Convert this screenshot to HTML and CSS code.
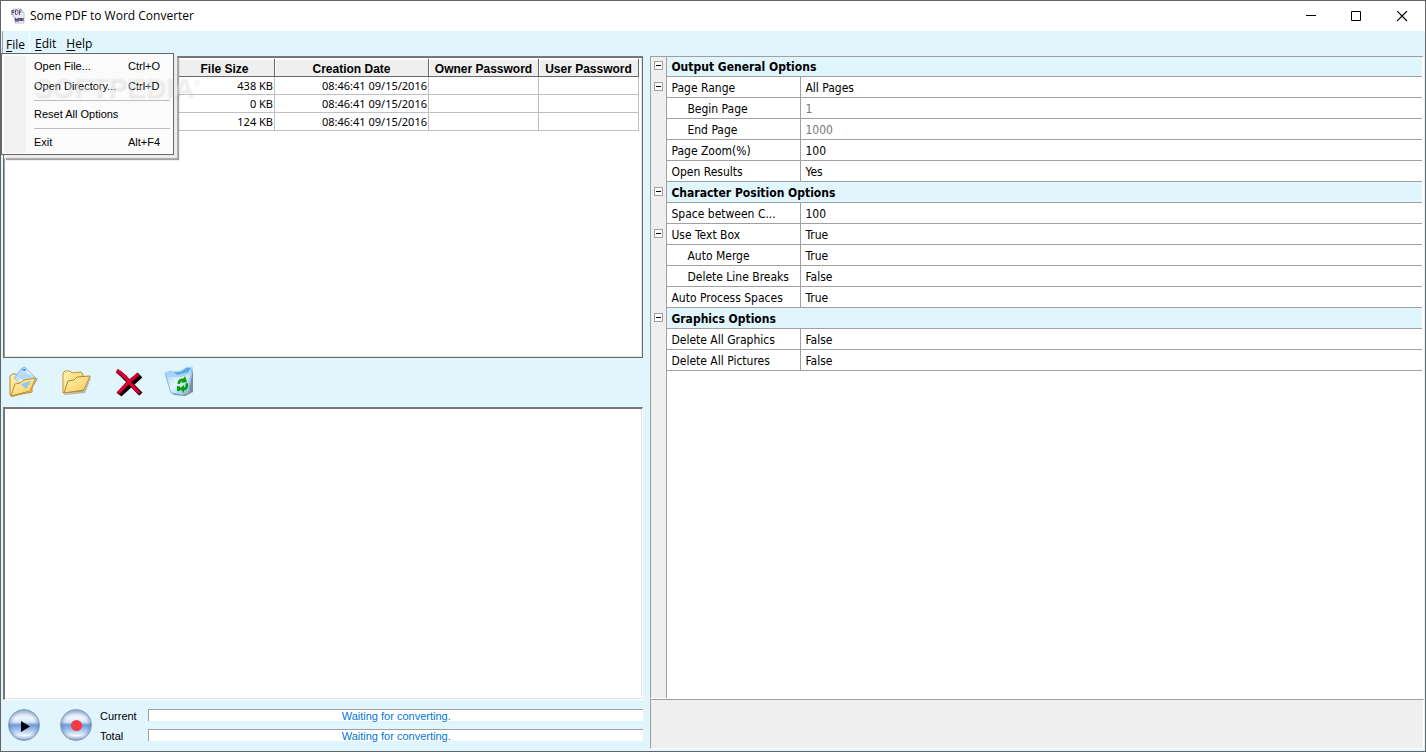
FILE: index.html
```html
<!DOCTYPE html>
<html lang="en">
<head>
<meta charset="utf-8">
<title>Some PDF to Word Converter</title>
<link rel="stylesheet" href="styles.css">
</head>
<body>
<div class="window">
  <header class="titlebar">
    <svg class="app-icon" viewBox="0 0 14 16" aria-hidden="true">
      <path d="M2 1h8l3 3v11H4V9H2z" fill="#e9e9ee" stroke="#c4c4cc"/>
      <path d="M10 1v3h3" fill="#fff" stroke="#c4c4cc"/>
      <path d="M1 2.500h2v2H1zM1 2v5M4.500 2v4.500h1.500l1-1v-2.500l-1-1zM8.500 7V2h2M8.500 4h2" fill="none" stroke="#6a5a82"/>
      <path d="M4 10l1 3 1-2 1 2 1-3M9 10.500h1.500v2H9zM12 10v3" fill="none" stroke="#4c3c78" stroke-width="1.200"/>
    </svg>
    <h1 class="title">Some PDF to Word Converter</h1>
    <div class="window-controls">
      <button class="window-button" aria-label="Minimize"><svg viewBox="0 0 11 11"><path d="M1 4.500h10" stroke="#000"/></svg></button>
      <button class="window-button" aria-label="Maximize"><svg viewBox="0 0 11 11"><path d="M.5.500h9v9h-9z" fill="none" stroke="#000"/></svg></button>
      <button class="window-button" aria-label="Close"><svg viewBox="0 0 11 11"><path d="M0 0l10 10M10 0L0 10" stroke="#000" stroke-width="1.200"/></svg></button>
    </div>
  </header>

  <nav class="menubar">
    <div class="menu-holder">
      <button class="menu-button open" aria-expanded="true"><u>F</u>ile</button>
      <div class="dropdown" role="menu">
        <div class="dropdown-items">
          <button class="menu-item" role="menuitem"><span>Open File...</span><span class="shortcut">Ctrl+O</span></button>
          <button class="menu-item" role="menuitem"><span>Open Directory...</span><span class="shortcut">Ctrl+D</span></button>
          <hr class="separator">
          <button class="menu-item" role="menuitem"><span>Reset All Options</span></button>
          <hr class="separator">
          <button class="menu-item" role="menuitem"><span>Exit</span><span class="shortcut">Alt+F4</span></button>
        </div>
        <span class="watermark">SOFTPEDIA<sup>®</sup></span>
      </div>
    </div>
    <button class="menu-button"><u>E</u>dit</button>
    <button class="menu-button"><u>H</u>elp</button>
  </nav>

  <main class="workspace">
    <section class="left">
      <div class="file-panel">
        <table class="files">
          <colgroup><col class="c-name"><col class="c-size"><col class="c-date"><col class="c-owner"><col class="c-user"></colgroup>
          <thead><tr><th></th><th>File Size</th><th>Creation Date</th><th>Owner Password</th><th>User Password</th></tr></thead>
          <tbody>
            <tr><td></td><td>438 KB</td><td>08:46:41 09/15/2016</td><td></td><td></td></tr>
            <tr><td></td><td>0 KB</td><td>08:46:41 09/15/2016</td><td></td><td></td></tr>
            <tr><td></td><td>124 KB</td><td>08:46:41 09/15/2016</td><td></td><td></td></tr>
          </tbody>
        </table>
      </div>

      <div class="toolbar">
        <button class="tool" aria-label="Open file">
          <svg viewBox="0 0 32 32">
            <defs>
              <linearGradient id="folder" x1="0" y1="0" x2="1" y2="1"><stop offset="0" stop-color="#fff3b4"/><stop offset="1" stop-color="#f6c95a"/></linearGradient>
              <linearGradient id="sheet" x1="0" y1="0" x2="1" y2="1"><stop offset="0" stop-color="#7dbcf0"/><stop offset=".5" stop-color="#dff2ff"/><stop offset="1" stop-color="#69aee9"/></linearGradient>
            </defs>
            <path d="M4 31l18-5 8-14-2 1-6 13-18 4z" fill="#8d9294"/>
            <path d="M2 29V10l2-2h4l2 2 14 2v14L3 30z" fill="url(#folder)" stroke="#b8862c"/>
            <path d="M6 12L14 2l3-1 10 10-9 11z" fill="url(#sheet)" stroke="#86b2d7" stroke-width=".7"/>
            <path d="M14 4l1-1 3 0-1 2z" fill="#3c8ee0"/>
            <path d="M10 11l7-5 7 5-5 5z" fill="#b5d9f7"/>
            <path d="M3 30l4-12 5-1 4-3 12-2-6 13z" fill="url(#folder)" stroke="#c2912d"/>
            <path d="M13 18l10-3-5 8z" fill="#8cc6f4"/>
          </svg>
        </button>
        <button class="tool" aria-label="Open directory">
          <svg viewBox="0 0 32 32">
            <path d="M4 28l20-3 7-15v2l-6 15-20 2z" fill="#b4b9b8"/>
            <path d="M3 27V7l2-2h5l2 2 9-1 2 2v17z" fill="url(#folder)" stroke="#c69434"/>
            <path d="M4 27l4-12 6-1 3-3 13-1-6 14z" fill="url(#folder)" stroke="#b8852c"/>
          </svg>
        </button>
        <button class="tool" aria-label="Remove">
          <svg viewBox="0 0 32 32">
            <path d="M7 6l22 22M29 10L8 29" stroke="#000" stroke-width="4"/>
            <path d="M5 5l8 6 5 6 10 11M27 8L16 17 6 28" fill="none" stroke="#600018" stroke-width="4"/>
            <path d="M5 4l8 7 5 6 9 10M26 8L16 17 6 27" fill="none" stroke="#de002d" stroke-width="3"/>
          </svg>
        </button>
        <button class="tool" aria-label="Clear all">
          <svg viewBox="0 0 32 32">
            <defs><linearGradient id="bin" x1="0" y1="0" x2="1" y2="1"><stop offset="0" stop-color="#8dc6f5"/><stop offset=".5" stop-color="#e5f6ff"/><stop offset="1" stop-color="#70a8df"/></linearGradient></defs>
            <path d="M8 27l11 2 6-3 4-24v24l-8 4-11-1z" fill="#7c8b95"/>
            <path d="M1 7q14 1 27-6l-3 24-7 4-11-2z" fill="url(#bin)" stroke="#70a9d8" stroke-width=".8"/>
            <path d="M1 7q3-3 8-2 9 1 13-4h6l-2 7-9 3H3z" fill="#a3d4f8"/>
            <path d="M10 6q8 1 12-4h5l-3 4-11 3z" fill="#5aa5e5"/>
            <path d="M13.500 18q0-6 6-5.500l1.500-2.500 2 6-6 1 1.500-2q-2 0-2.500 3zM24 17q1 7-4 7.500v2.500l-4-4.500 4-3.500v2.500q2 0 1.500-4zM13 20l3 .500 1 2.500-1 2h-3z" fill="#08a000"/>
          </svg>
        </button>
      </div>

      <div class="log-panel"></div>

      <div class="statusbar">
        <button class="round" aria-label="Start">
          <svg viewBox="0 0 32 32">
            <defs>
              <linearGradient id="ball" x1="0" y1="0" x2="0" y2="1"><stop offset="0" stop-color="#b3c8e5"/><stop offset=".25" stop-color="#f0f6fd"/><stop offset=".4" stop-color="#dae7f7"/><stop offset=".5" stop-color="#6f9bd7"/><stop offset=".66" stop-color="#a2c5ef"/><stop offset=".85" stop-color="#f6fbff"/><stop offset="1" stop-color="#a5bddb"/></linearGradient>
              <radialGradient id="rim"><stop offset=".7" stop-color="#4978b5" stop-opacity="0"/><stop offset="1" stop-color="#456b9f" stop-opacity=".45"/></radialGradient>
            </defs>
            <circle cx="16" cy="16" r="15.500" fill="url(#ball)"/><circle cx="16" cy="16" r="15.500" fill="url(#rim)" stroke="#8fa3bc"/>
            <path d="M13 12v11l9-5.500z" fill="#000"/>
          </svg>
        </button>
        <button class="round" aria-label="Stop">
          <svg viewBox="0 0 32 32"><circle cx="16" cy="16" r="15.500" fill="url(#ball)"/><circle cx="16" cy="16" r="15.500" fill="url(#rim)" stroke="#8fa3bc"/><circle cx="16.500" cy="16.500" r="5.500" fill="#f33b45"/></svg>
        </button>
        <div class="progress-list">
          <span class="progress-label" id="current-label">Current</span><div class="progress" role="progressbar" aria-labelledby="current-label">Waiting for converting.</div>
          <span class="progress-label" id="total-label">Total</span><div class="progress" role="progressbar" aria-labelledby="total-label">Waiting for converting.</div>
        </div>
      </div>
    </section>

    <section class="right">
      <div class="property-panel">
        <table class="properties">
          <colgroup><col class="c-gutter"><col class="c-key"><col></colgroup>
          <tbody>
            <tr class="category"><td class="gutter"><button class="toggle" aria-label="Collapse"></button></td><th colspan="2">Output General Options</th></tr>
            <tr><td class="gutter"><button class="toggle" aria-label="Collapse"></button></td><td>Page Range</td><td>All Pages</td></tr>
            <tr><td class="gutter"></td><td class="sub">Begin Page</td><td class="disabled">1</td></tr>
            <tr><td class="gutter"></td><td class="sub">End Page</td><td class="disabled">1000</td></tr>
            <tr><td class="gutter"></td><td>Page Zoom(%)</td><td>100</td></tr>
            <tr><td class="gutter"></td><td>Open Results</td><td>Yes</td></tr>
            <tr class="category"><td class="gutter"><button class="toggle" aria-label="Collapse"></button></td><th colspan="2">Character Position Options</th></tr>
            <tr><td class="gutter"></td><td>Space between C...</td><td>100</td></tr>
            <tr><td class="gutter"><button class="toggle" aria-label="Collapse"></button></td><td>Use Text Box</td><td>True</td></tr>
            <tr><td class="gutter"></td><td class="sub">Auto Merge</td><td>True</td></tr>
            <tr><td class="gutter"></td><td class="sub">Delete Line Breaks</td><td>False</td></tr>
            <tr><td class="gutter"></td><td>Auto Process Spaces</td><td>True</td></tr>
            <tr class="category"><td class="gutter"><button class="toggle" aria-label="Collapse"></button></td><th colspan="2">Graphics Options</th></tr>
            <tr><td class="gutter"></td><td>Delete All Graphics</td><td>False</td></tr>
            <tr><td class="gutter"></td><td>Delete All Pictures</td><td>False</td></tr>
          </tbody>
        </table>
      </div>
      <div class="description"></div>
    </section>
  </main>
</div>
</body>
</html>
```
FILE: styles.css
```css
* { box-sizing: border-box; }
body { margin: 0; color: #000; font: 12px/16px "Open Sans", sans-serif; }
button { margin: 0; padding: 0; border: 0; background: none; color: inherit; font: inherit; }
svg { display: block; }

.window {
  display: flex;
  flex-direction: column;
  min-height: 100vh;
  border: 1px solid #646464;
  background: #e1f5fd;
}

.titlebar { display: flex; align-items: center; height: 30px; padding-left: 10px; background: #fff; }
.app-icon { width: 14px; height: 16px; margin-right: 5px; }
.title { flex: 1; margin: 0; font-size: 12px; font-weight: 400; }
.window-controls { display: flex; }
.window-button { display: flex; align-items: center; justify-content: center; width: 46px; height: 30px; }
.window-button svg { width: 11px; height: 11px; }

.menubar { display: flex; height: 25px; padding-left: 1px; }
.menu-holder { position: relative; }
.menu-button { height: 25px; padding: 0 5px; }
.menu-button u { text-underline-offset: 2px; }
.menu-button.open { height: 22px; padding: 5px 4px 0 3px; border-left: 1px solid #a0a0a0; border-right: 1px solid #fff; }

.dropdown {
  position: absolute;
  z-index: 2;
  top: 22px;
  left: -1px;
  width: 173px;
  padding: 2px 2px 1px;
  border: 1px solid #686868;
  background: #fbfbfb;
  box-shadow: 3px 3px 1px #ececec, 5px 5px 1px #a0a0a0;
  font: 11px/20px "Liberation Sans", sans-serif;
}
.dropdown-items { padding: 0 1px 1px 30px; background: linear-gradient(to right, #f1f1f1 22px, #fbfbfb 22px); }
.menu-item { display: flex; justify-content: space-between; width: 100%; height: 20px; text-align: left; }
.shortcut { width: 42px; white-space: nowrap; }
.separator { height: 1px; margin: 4px 0 3px; border: 0; background: #bdbdbd; }
.watermark {
  position: absolute;
  top: 20px;
  left: 31px;
  color: rgba(255, 255, 255, .35);
  font: bold 28px/28px "Liberation Sans", sans-serif;
  text-shadow: 1px 1px 2px rgba(0, 0, 0, .1);
  white-space: nowrap;
  pointer-events: none;
}
.watermark sup { font-size: 8px; line-height: 8px; vertical-align: 12px; }

.workspace { display: grid; flex: 1; grid-template-columns: 640fr 773fr; gap: 7px; padding: 0 1px 2px 2px; }
.left, .right { display: flex; flex-direction: column; min-width: 0; }

.file-panel { height: 302px; padding: 1px 2px; border: 1px solid #696969; border-top: 2px solid #777; background: #fff; box-shadow: inset 1px 0 #a0a0a0, inset -1px -1px #e3e3e3; }
.files { width: 633px; border-collapse: separate; border-spacing: 0; table-layout: fixed; font: 11px/16px "Noto Sans", sans-serif; }
.c-name { width: 169px; }
.c-size { width: 100px; }
.c-date { width: 154px; }
.c-owner { width: 110px; }
.c-user { width: 100px; }
.files th { height: 18px; padding: 3px 0 0; border-right: 1px solid #696969; border-bottom: 1px solid #696969; background: #efefef; font: bold 12px/14px "Liberation Sans", sans-serif; white-space: nowrap; box-shadow: inset 1px 1px #fff; }
.files td { height: 18px; padding: 1px 1px 0 0; border-right: 1px solid #c0c0c0; border-bottom: 1px solid #c0c0c0; text-align: right; white-space: nowrap; }

.toolbar { display: flex; align-items: center; gap: 20px; height: 49px; padding: 0 0 2px 5px; }
.tool, .tool svg { width: 32px; height: 32px; }

.log-panel { flex: 1; min-height: 100px; border-top: 2px solid #777; border-left: 2px solid #777; border-right: 1px solid #fff; border-bottom: 1px solid #fff; background: #fff; box-shadow: inset -1px -1px #e3e3e3; }

.statusbar { display: flex; align-items: center; gap: 20px; height: 49px; padding-left: 5px; }
.round, .round svg { width: 32px; height: 32px; }
.progress-list { display: grid; flex: 1; grid-template-columns: 48px 1fr; grid-auto-rows: 12px; row-gap: 8px; margin-left: -12px; font: 11px/12px "Liberation Sans", sans-serif; }
.progress-label { padding-top: 1px; }
.progress { height: 12px; border-top: 1px solid #a0a0a0; border-left: 1px solid #a0a0a0; background: #fff; color: #0078d7; text-align: center; }

.property-panel { flex: 1; border: 1px solid #a0a0a0; border-right: 2px solid #fff; border-bottom: 1px solid #fff; background: linear-gradient(to right, #efefef 15px, #a0a0a0 15px, #a0a0a0 16px, #fff 16px); }
.properties { width: 100%; border-collapse: separate; border-spacing: 0; table-layout: fixed; font: 12px/18px "DejaVu Sans Condensed", "DejaVu Sans", sans-serif; }
.c-gutter { width: 16px; }
.c-key { width: 134px; }
.properties td, .properties th { height: 21px; padding: 2px 4px 0; border-bottom: 1px solid #a0a0a0; text-align: left; white-space: nowrap; }
.properties tr:first-child td, .properties tr:first-child th { height: 20px; line-height: 17px; }
.properties td:nth-child(2) { border-right: 1px solid #a0a0a0; }
.properties .gutter { padding: 5px 0 0 3px; border-right: 1px solid #a0a0a0; border-bottom: 0; vertical-align: top; }
.properties tr:first-child .gutter { padding-top: 4px; }
.properties .sub { padding-left: 20px; }
.properties .disabled { color: #777; }
.properties .category th { background: #e1f5fd; }
.toggle { display: block; width: 9px; height: 9px; border: 1px solid #a0a0a0; background: linear-gradient(#000, #000) center / 5px 1px no-repeat #fff; }

.description { height: 50px; border: 1px solid #a0a0a0; border-right: 1px solid #fff; border-bottom: 1px solid #fff; background: #efefef; }
```
